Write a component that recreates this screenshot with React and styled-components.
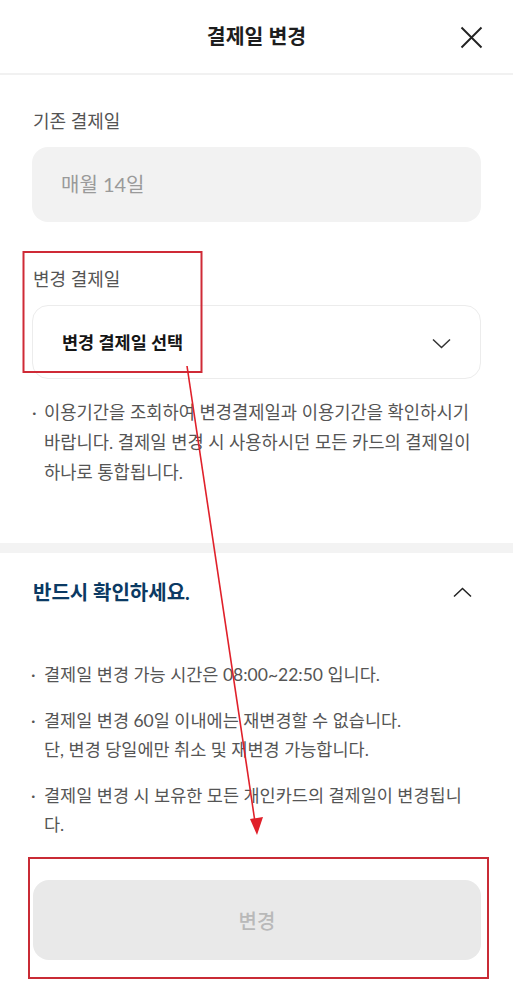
import React from 'react'
import styled, { createGlobalStyle } from 'styled-components'

const FONT = `Lato, "Noto Sans CJK KR", "Noto Sans", sans-serif`

const GlobalStyle = createGlobalStyle`
  html, body { margin: 0; padding: 0; background: #fff; }
  body { font-family: ${FONT}; color: #222; }
  * { box-sizing: border-box; }
`

const notices = [
  ['결제일 변경 가능 시간은 08:00~22:50 입니다.'],
  ['결제일 변경 60일 이내에는 재변경할 수 없습니다.', '단, 변경 당일에만 취소 및 재변경 가능합니다.'],
  ['결제일 변경 시 보유한 모든 개인카드의 결제일이 변경됩니다.'],
]

const App = () => {
  return (
    <Page>
      <GlobalStyle />
      <Header>
        <Title>결제일 변경</Title>
        <CloseButton aria-label="닫기">
          <svg width="23" height="23" viewBox="0 0 23 23">
            <path d="M1.5 1.5 L21.5 21.5 M21.5 1.5 L1.5 21.5" stroke="#222" strokeWidth="1.9" fill="none" />
          </svg>
        </CloseButton>
      </Header>

      <FormSection>
        <Label>기존 결제일</Label>
        <ReadonlyField>매월 14일</ReadonlyField>

        <Label top="45px">변경 결제일</Label>
        <SelectField>
          <span>변경 결제일 선택</span>
          <svg width="19" height="11" viewBox="0 0 19 11">
            <path d="M1 1.5 L9.5 9.5 L18 1.5" stroke="#333" strokeWidth="1.5" fill="none" />
          </svg>
        </SelectField>

        <NoteList>
          <NoteItem>
            이용기간을 조회하여 변경결제일과 이용기간을 확인하시기 바랍니다. 결제일 변경 시 사용하시던 모든 카드의 결제일이 하나로 통합됩니다.
          </NoteItem>
        </NoteList>
      </FormSection>

      <Band />

      <InfoSection>
        <InfoHeader>
          <InfoTitle>반드시 확인하세요.</InfoTitle>
          <svg width="19" height="11" viewBox="0 0 19 11">
            <path d="M1 9.5 L9.5 1.5 L18 9.5" stroke="#222" strokeWidth="1.5" fill="none" />
          </svg>
        </InfoHeader>
        <InfoList>
          {notices.map((lines, i) => (
            <InfoItem key={i}>
              {lines.map((l, j) => (
                <span key={j}>{l}</span>
              ))}
            </InfoItem>
          ))}
        </InfoList>
        <SubmitButton disabled>변경</SubmitButton>
      </InfoSection>

      <Annotations width="513" height="1000" viewBox="0 0 513 1000">
        <rect x="23.5" y="252" width="178" height="120" fill="none" stroke="#cf2a36" strokeWidth="2" />
        <rect x="29" y="858" width="459" height="120" fill="none" stroke="#c92b35" strokeWidth="2" />
        <line x1="187" y1="366" x2="255" y2="822" stroke="#e0202a" strokeWidth="1.6" />
        <polygon points="250,819 263,817 257,835" fill="#e0202a" />
      </Annotations>
    </Page>
  )
}

const Page = styled.div`
  position: relative;
  width: 513px;
  min-height: 1000px;
  background: #fff;
`

const Header = styled.header`
  position: relative;
  height: 75px;
  display: flex;
  align-items: center;
  justify-content: center;
  border-bottom: 2px solid #f1f1f1;
`

const Title = styled.h1`
  margin: 0;
  font-size: 20.5px;
  font-weight: 700;
  color: #1d1d1d;
  line-height: 28px;
  margin-top: -2px;
`

const CloseButton = styled.button`
  position: absolute;
  right: 30px;
  top: 26px;
  padding: 0;
  border: 0;
  background: none;
  display: flex;
`

const FormSection = styled.section`
  padding: 34px 32px 55px;
  display: flex;
  flex-direction: column;
`

const Label = styled.div`
  margin-top: ${p => p.top || '0'};
  font-size: 18px;
  line-height: 24px;
  color: #555;
  padding-left: 1px;
`

const fieldBase = `
  margin-top: 14px;
  height: 75px;
  border-radius: 16px;
  display: flex;
  align-items: center;
  padding: 0 29px;
`

const ReadonlyField = styled.div`
  ${fieldBase}
  background: #f2f2f2;
  color: #9a9a9a;
  font-size: 20px;
  padding-bottom: 2px;
`

const SelectField = styled.div`
  ${fieldBase}
  height: 74px;
  border: 1px solid #ececec;
  justify-content: space-between;
  font-size: 17.5px;
  font-weight: 700;
  color: #151515;
  padding-right: 29px;
  span { margin-top: -2px; }
  svg { margin-top: 2px; }
`

const NoteList = styled.ul`
  margin: 19px 0 0;
  padding: 0;
  list-style: none;
`

const NoteItem = styled.li`
  position: relative;
  padding-left: 12px;
  padding-right: 8px;
  font-size: 17.7px;
  line-height: 30px;
  color: #555;
  &::before {
    content: '·';
    position: absolute;
    left: 0;
    top: 0;
  }
`

const Band = styled.div`
  height: 10px;
  background: #f3f3f3;
`

const InfoSection = styled.section`
  padding: 25px 32px 40px 33px;
  display: flex;
  flex-direction: column;
`

const InfoHeader = styled.div`
  display: flex;
  align-items: center;
  justify-content: space-between;
  padding-right: 9px;
`

const InfoTitle = styled.h2`
  margin: 0;
  font-size: 20px;
  line-height: 28px;
  font-weight: 700;
  color: #0b3a63;
`

const InfoList = styled.ul`
  margin: 54px 0 0;
  padding: 0;
  list-style: none;
  display: flex;
  flex-direction: column;
  gap: 17px;
`

const InfoItem = styled.li`
  position: relative;
  padding-left: 11px;
  padding-right: 12px;
  font-size: 17.5px;
  line-height: 29px;
  color: #555;
  span { display: block; }
  &::before {
    content: '·';
    position: absolute;
    left: -2px;
    top: 0;
  }
`

const SubmitButton = styled.button`
  margin-top: 41px;
  height: 80px;
  border: 0;
  border-radius: 16px;
  background: #e9e9e9;
  color: #b9b9b9;
  font-family: ${FONT};
  font-size: 20px;
  font-weight: 500;
`

const Annotations = styled.svg`
  position: absolute;
  left: 0;
  top: 0;
  pointer-events: none;
`

export default App
